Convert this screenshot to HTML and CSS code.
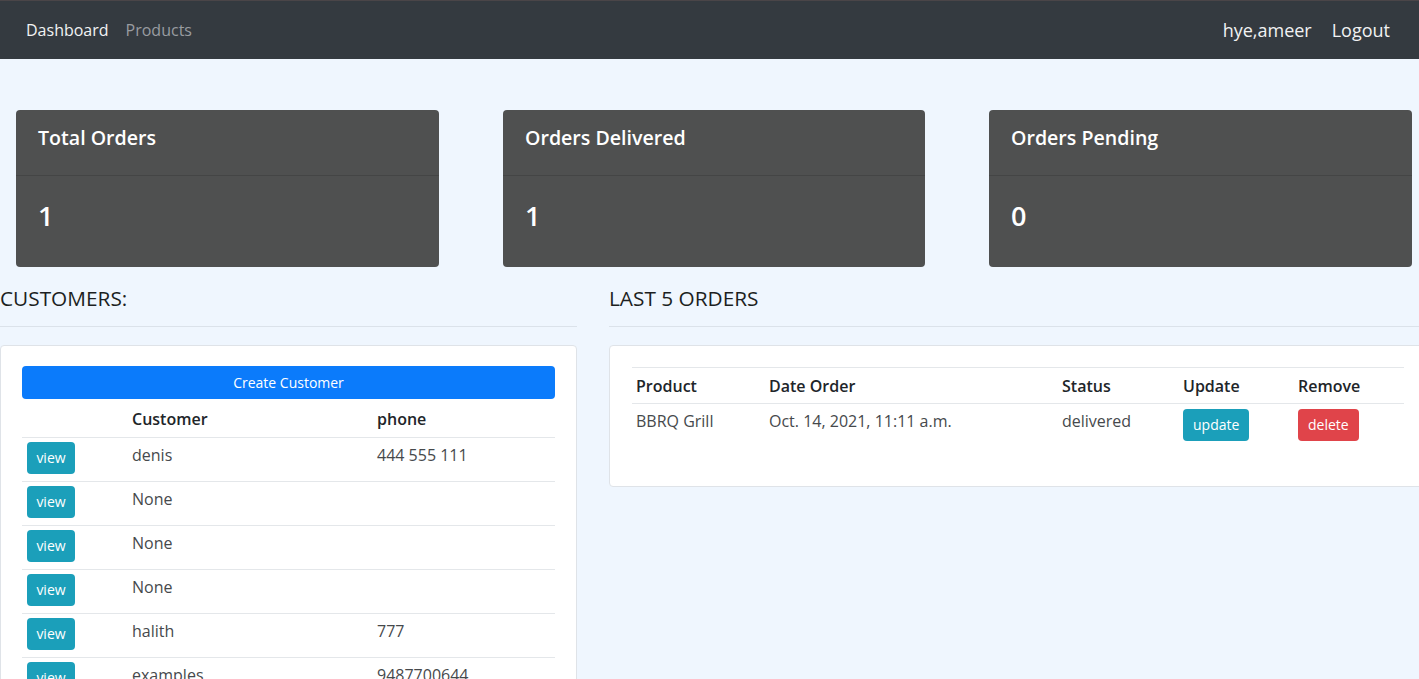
FILE: index.html
```html
<!DOCTYPE html>
<html lang="en">
<head>
<meta charset="utf-8">
<title>Dashboard</title>
<link rel="stylesheet" href="styles.css">
</head>
<body>
<nav class="navbar">
  <div class="nav-left">
    <a class="nav-link active" href="#">Dashboard</a>
    <a class="nav-link muted" href="#">Products</a>
  </div>
  <div class="nav-right">
    <span class="nav-link nav-big active">hye,ameer</span>
    <a class="nav-link nav-big active" href="#">Logout</a>
  </div>
</nav>

<main class="page">
  <section class="stats">
    <div class="stat-card">
      <div class="stat-head">Total Orders</div>
      <div class="stat-body">1</div>
    </div>
    <div class="stat-card">
      <div class="stat-head">Orders Delivered</div>
      <div class="stat-body">1</div>
    </div>
    <div class="stat-card">
      <div class="stat-head">Orders Pending</div>
      <div class="stat-body">0</div>
    </div>
  </section>

  <section class="lower">
    <div class="col">
      <h5 class="section-title">CUSTOMERS:</h5>
      <hr class="rule">
      <div class="panel panel-left">
        <a class="btn btn-primary btn-block" href="#">Create Customer</a>
        <table class="table cust-table">
          <colgroup><col class="c1"><col class="c2"><col></colgroup>
          <thead>
            <tr><th></th><th>Customer</th><th>phone</th></tr>
          </thead>
          <tbody>
            <tr><td><a class="btn btn-info btn-view" href="#">view</a></td><td>denis</td><td>444 555 111</td></tr>
            <tr><td><a class="btn btn-info btn-view" href="#">view</a></td><td>None</td><td></td></tr>
            <tr><td><a class="btn btn-info btn-view" href="#">view</a></td><td>None</td><td></td></tr>
            <tr><td><a class="btn btn-info btn-view" href="#">view</a></td><td>None</td><td></td></tr>
            <tr><td><a class="btn btn-info btn-view" href="#">view</a></td><td>halith</td><td>777</td></tr>
            <tr><td><a class="btn btn-info btn-view" href="#">view</a></td><td>examples</td><td>9487700644</td></tr>
          </tbody>
        </table>
      </div>
    </div>
    <div class="col">
      <h5 class="section-title">LAST 5 ORDERS</h5>
      <hr class="rule">
      <div class="panel panel-right">
        <table class="table orders-table">
          <colgroup><col class="o1"><col class="o2"><col class="o3"><col class="o4"><col></colgroup>
          <thead>
            <tr><th>Product</th><th>Date Order</th><th>Status</th><th>Update</th><th>Remove</th></tr>
          </thead>
          <tbody>
            <tr>
              <td>BBRQ Grill</td>
              <td>Oct. 14, 2021, 11:11 a.m.</td>
              <td>delivered</td>
              <td><a class="btn btn-info btn-sm" href="#">update</a></td>
              <td><a class="btn btn-danger btn-sm" href="#">delete</a></td>
            </tr>
          </tbody>
        </table>
      </div>
    </div>
  </section>
</main>
</body>
</html>
```

FILE: styles.css
```css
* { box-sizing: border-box; }

html, body {
  margin: 0;
  padding: 0;
}

body {
  font-family: "Open Sans", "Noto Sans", "Liberation Sans", sans-serif;
  font-size: 16px;
  color: #46494c;
  background: #eff6fe;
  overflow: hidden;
  width: 1419px;
  height: 679px;
}

a { text-decoration: none; }

.navbar {
  height: 59px;
  background: #343a40;
  border-top: 1px solid #4a4548;
  display: flex;
  align-items: center;
  justify-content: space-between;
  padding: 0 29px 0 26px;
}

.nav-left, .nav-right {
  display: flex;
  align-items: center;
  gap: 17px;
}

.nav-right { gap: 20px; }

.nav-link {
  font-size: 16px;
  line-height: 24px;
}

.nav-big { font-size: 18px; }

.nav-link.active { color: #f1f2f3; }
.nav-link.muted { color: #999ca0; }

.page {
  padding-top: 51px;
}

.stats {
  display: grid;
  grid-template-columns: 423px 422px 423px;
  column-gap: 64px;
  padding-left: 16px;
}

.stat-card {
  background: #4f5050;
  border-radius: 4px;
  height: 157px;
  color: #ffffff;
  display: flex;
  flex-direction: column;
}

.stat-head {
  height: 66px;
  border-bottom: 1px solid #444545;
  padding: 14px 22px 0;
  font-size: 19.6px;
  font-weight: 600;
  line-height: 28px;
}

.stat-body {
  padding: 23px 22px 0;
  font-size: 27px;
  font-weight: 600;
  line-height: 34px;
}

.lower {
  display: grid;
  grid-template-columns: 577px 818px;
  column-gap: 32px;
  margin-top: 17px;
}

.section-title {
  margin: 0;
  font-size: 20.8px;
  font-weight: 400;
  line-height: 28px;
  color: #1c1f22;
  height: 32px;
}

.rule {
  margin: 10px 0 18px;
  border: 0;
  border-top: 1px solid #dbe2ea;
}

.panel {
  background: #ffffff;
  border: 1px solid #dfe3e8;
  border-radius: 4px;
  padding: 20px 21px;
}

.panel-right {
  padding: 21px 22px 20px;
}

.btn {
  display: inline-block;
  color: #ffffff;
  border-radius: 4px;
  text-align: center;
  font-size: 14px;
}

.btn-primary { background: #0b7bfb; }
.btn-info { background: #1b9fba; }
.btn-danger { background: #e0444a; }

.btn-block {
  display: block;
  height: 33px;
  line-height: 33px;
}

.btn-view {
  display: block;
  width: 48px;
  height: 32px;
  line-height: 32px;
}

.btn-sm {
  height: 32px;
  line-height: 32px;
  padding: 0 10px;
}

.table {
  width: 100%;
  border-collapse: collapse;
}

.table th {
  text-align: left;
  font-weight: 600;
  color: #212529;
  font-size: 16px;
  line-height: 24px;
}

.table td {
  vertical-align: top;
  line-height: 24px;
}

.cust-table .c1 { width: 105px; }
.cust-table .c2 { width: 245px; }

.cust-table th {
  padding: 8px 5px 6px;
}

.cust-table td {
  border-top: 1px solid #e4e7ea;
  padding: 5px 5px 7px;
}

.cust-table td:first-child { padding-top: 4px; padding-bottom: 7px; }

.orders-table {
  margin-bottom: 20px;
}

.orders-table .o1 { width: 133px; }
.orders-table .o2 { width: 293px; }
.orders-table .o3 { width: 121px; }
.orders-table .o4 { width: 115px; }

.orders-table th {
  border-top: 1px solid #e4e7ea;
  border-bottom: 1px solid #e4e7ea;
  padding: 6px 4px 5px;
}

.orders-table td {
  padding: 5px 4px 5px;
}
```
